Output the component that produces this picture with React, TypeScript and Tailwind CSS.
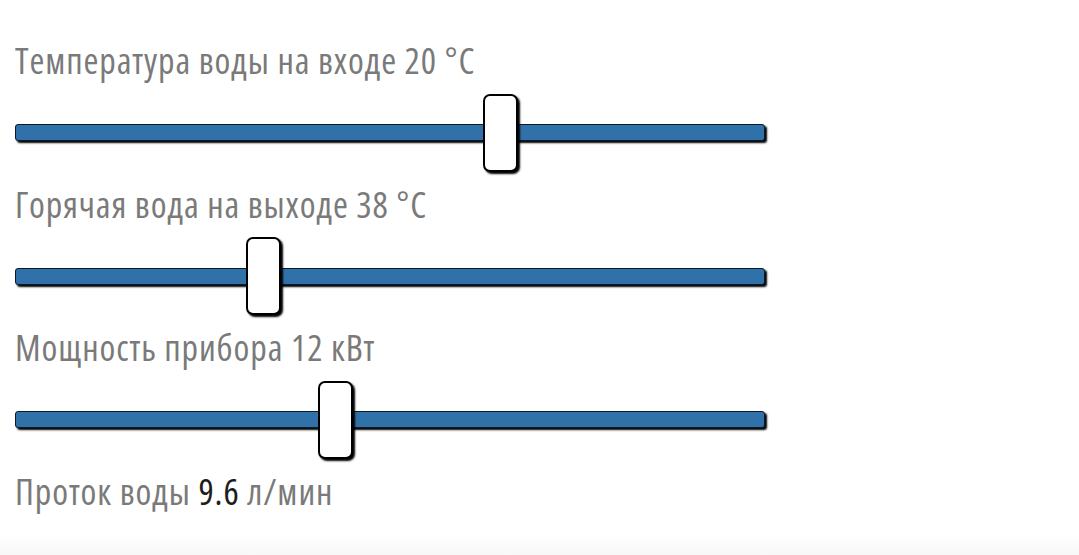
import { useState } from "react";

type SliderProps = {
  value: number;
  min: number;
  max: number;
};

const TRACK_W = 750;
const THUMB_W = 35;

function Slider({ value, min, max }: SliderProps) {
  // thumb travels inside the track, like a native range input
  const left = ((value - min) / (max - min)) * (TRACK_W - THUMB_W);
  return (
    <div className="flex h-[95.5px] items-center">
      <div className="relative h-[17px] w-[750px] rounded-[3px] border border-[#0b1a29] bg-[#3071a9] shadow-[2px_2px_2px_#000]">
        <div
          className="absolute top-1/2 h-[78px] w-[35px] -translate-y-1/2 rounded-[7px] border-2 border-black bg-white shadow-[2px_2px_2px_#000]"
          style={{ left: left - 1 }}
        />
      </div>
    </div>
  );
}

export default function App() {
  const [tIn] = useState(20);
  const [tOut] = useState(38);
  const [power] = useState(12);

  const flow = ((power * 1000) / (4186 * (tOut - tIn))) * 60;
  const flowText = flow.toFixed(1);

  return (
    <div className="relative h-[555px] w-[1079px] overflow-hidden bg-white font-['Open_Sans',sans-serif] text-[#7a7a7a] tracking-[0.9px] [font-stretch:75%]">
      <div className="pl-[15px] pt-[37px]">
        <div className="h-[48px] text-[36px] leading-[48px]">
          Температура воды на входе {tIn} °C
        </div>
        <Slider value={tIn} min={1} max={30} />

        <div className="h-[48px] text-[36px] leading-[48px]">
          Горячая вода на выходе {tOut} °C
        </div>
        <Slider value={tOut} min={28} max={59} />

        <div className="h-[48px] text-[36px] leading-[48px]">
          Мощность прибора {power} кВт
        </div>
        <Slider value={power} min={1} max={27} />

        <div className="h-[48px] text-[36px] leading-[48px]">
          Проток воды <span className="text-[#1d1d1d]">{flowText}</span> л/мин
        </div>
      </div>
      <div className="absolute inset-x-0 bottom-0 h-[20px] bg-gradient-to-b from-white to-[#f8f8f8]" />
    </div>
  );
}
